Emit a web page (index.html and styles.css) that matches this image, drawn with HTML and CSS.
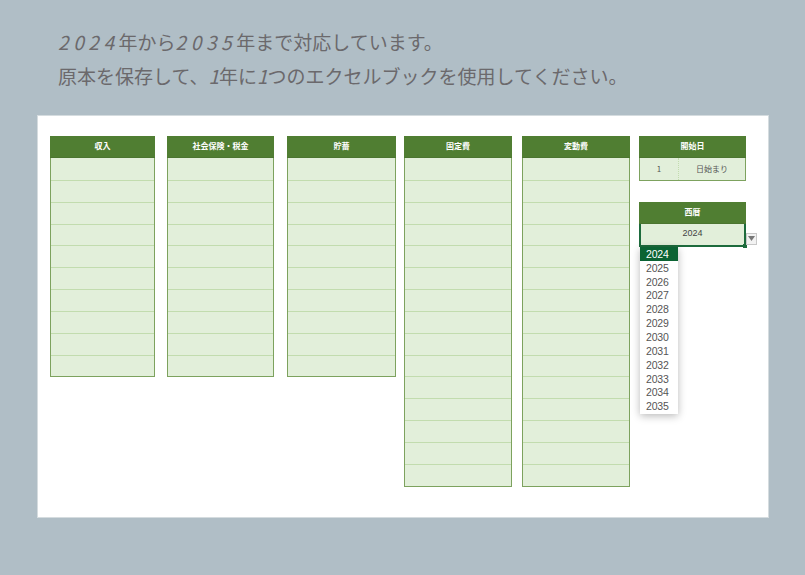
FILE: index.html
```html
<!DOCTYPE html>
<html lang="ja">
<head>
<meta charset="utf-8">
<title>年の設定</title>
<link rel="stylesheet" href="styles.css">
</head>
<body>
<header class="intro">
  <p><span class="digits">2024</span>年から<span class="digits">2035</span>年まで対応しています。</p>
  <p>原本を保存して、<i class="one">1</i>年に<i class="one">1</i>つのエクセルブックを使用してください。</p>
</header>
<main class="sheet">
  <section class="col w-a">
    <h2>収入</h2>
    <div class="row"></div><div class="row"></div><div class="row"></div><div class="row"></div><div class="row"></div>
    <div class="row"></div><div class="row"></div><div class="row"></div><div class="row"></div><div class="row"></div>
  </section>
  <section class="col w-b gap-12">
    <h2>社会保険・税金</h2>
    <div class="row"></div><div class="row"></div><div class="row"></div><div class="row"></div><div class="row"></div>
    <div class="row"></div><div class="row"></div><div class="row"></div><div class="row"></div><div class="row"></div>
  </section>
  <section class="col w-d gap-13">
    <h2>貯蓄</h2>
    <div class="row"></div><div class="row"></div><div class="row"></div><div class="row"></div><div class="row"></div>
    <div class="row"></div><div class="row"></div><div class="row"></div><div class="row"></div><div class="row"></div>
  </section>
  <section class="col w-e gap-8">
    <h2>固定費</h2>
    <div class="row"></div><div class="row"></div><div class="row"></div><div class="row"></div><div class="row"></div>
    <div class="row"></div><div class="row"></div><div class="row"></div><div class="row"></div><div class="row"></div>
    <div class="row"></div><div class="row"></div><div class="row"></div><div class="row"></div><div class="row"></div>
  </section>
  <section class="col w-e gap-10">
    <h2>変動費</h2>
    <div class="row"></div><div class="row"></div><div class="row"></div><div class="row"></div><div class="row"></div>
    <div class="row"></div><div class="row"></div><div class="row"></div><div class="row"></div><div class="row"></div>
    <div class="row"></div><div class="row"></div><div class="row"></div><div class="row"></div><div class="row"></div>
  </section>
  <div class="side gap-9">
    <section class="col w-b">
      <h2>開始日</h2>
      <div class="row split"><span class="num">1</span><span class="label">日始まり</span></div>
    </section>
    <section class="col w-b year">
      <h2>西暦</h2>
      <div class="row selected">2024<i class="handle"></i></div>
      <div class="arrow"><svg width="7" height="5" viewBox="0 0 7 5"><path d="M0 0h7L3.500 5z" fill="#777"/></svg></div>
      <ul class="menu">
        <li class="on">2024</li><li>2025</li><li>2026</li><li>2027</li><li>2028</li><li>2029</li>
        <li>2030</li><li>2031</li><li>2032</li><li>2033</li><li>2034</li><li>2035</li>
      </ul>
    </section>
  </div>
</main>
</body>
</html>
```
FILE: styles.css
```css
* { box-sizing: border-box; }
html, body { margin: 0; height: 100%; }
body {
  width: 805px;
  height: 575px;
  overflow: hidden;
  background: #b0bec6;
  padding: 25px 37px 0 38px;
  font-family: "Noto Sans CJK JP", sans-serif;
}
.intro { height: 91px; padding-left: 20px; color: #6b696c; }
.intro p {
  margin: 0;
  height: 34px;
  line-height: 34px;
  font-size: 19px;
  font-weight: 400;
  white-space: nowrap;
}
.digits { font-style: italic; letter-spacing: 4.6px; }
.one { font-style: italic; }
.sheet {
  display: flex;
  align-items: flex-start;
  height: 401px;
  padding: 20px 0 0 12px;
  background: #fff;
  box-shadow: 0 0 0 1px #d5dcdf;
}
.col {
  border: 1px solid #7da25e;
  background: #e2efda;
}
.w-a { width: 105px; }
.w-b { width: 107px; }
.w-d { width: 109px; }
.w-e { width: 108px; }
.gap-8 { margin-left: 8px; }
.gap-9 { margin-left: 9px; }
.gap-10 { margin-left: 10px; }
.gap-12 { margin-left: 12px; }
.gap-13 { margin-left: 13px; }
.col h2 {
  margin: -1px -1px 0;
  height: 22px;
  background: #507e32;
  color: #fff;
  font-size: 8px;
  font-weight: 700;
  line-height: 20px;
  text-align: center;
  border-bottom: 1px solid #4b7530;
}
.row {
  height: 21.85px;
  border-top: 1px solid #c2dcae;
}
h2 + .row { border-top: 0; }
.side { display: flex; flex-direction: column; gap: 21px; }
.split {
  display: flex;
  font-size: 8px;
  line-height: 21px;
  color: #555;
  text-align: center;
}
.num { width: 39px; border-right: 1px dotted #c2dcae; }
.label { flex: 1; }
.year { position: relative; border: 0; background: none; }
.year h2 { margin: 0; height: 22px; }
.selected {
  position: relative;
  height: 23px;
  border: 2px solid #1d6b3c;
  background: #e2efda;
  font-family: "Liberation Sans", sans-serif;
  font-size: 9px;
  line-height: 19px;
  color: #444;
  text-align: center;
}
.handle {
  position: absolute;
  right: -3px;
  bottom: -3px;
  width: 4px;
  height: 4px;
  background: #1d6b3c;
}
.arrow {
  position: absolute;
  left: 107px;
  top: 31px;
  width: 11px;
  height: 12px;
  background: #f2f2f2;
  border: 1px solid #c8c8c8;
  display: flex;
  align-items: center;
  justify-content: center;
}
.menu {
  position: absolute;
  left: 1px;
  top: 45px;
  width: 38px;
  margin: 0;
  padding: 0 0 1px;
  list-style: none;
  background: #fff;
  box-shadow: 0 2px 8px rgba(0, 0, 0, 0.28);
  font-family: "Liberation Sans", sans-serif;
  font-size: 10.500px;
  letter-spacing: -0.2px;
  color: #555;
}
.menu li { height: 13.87px; line-height: 14px; padding-left: 6px; }
.menu .on { background: #0b6333; color: #fff; }
```
